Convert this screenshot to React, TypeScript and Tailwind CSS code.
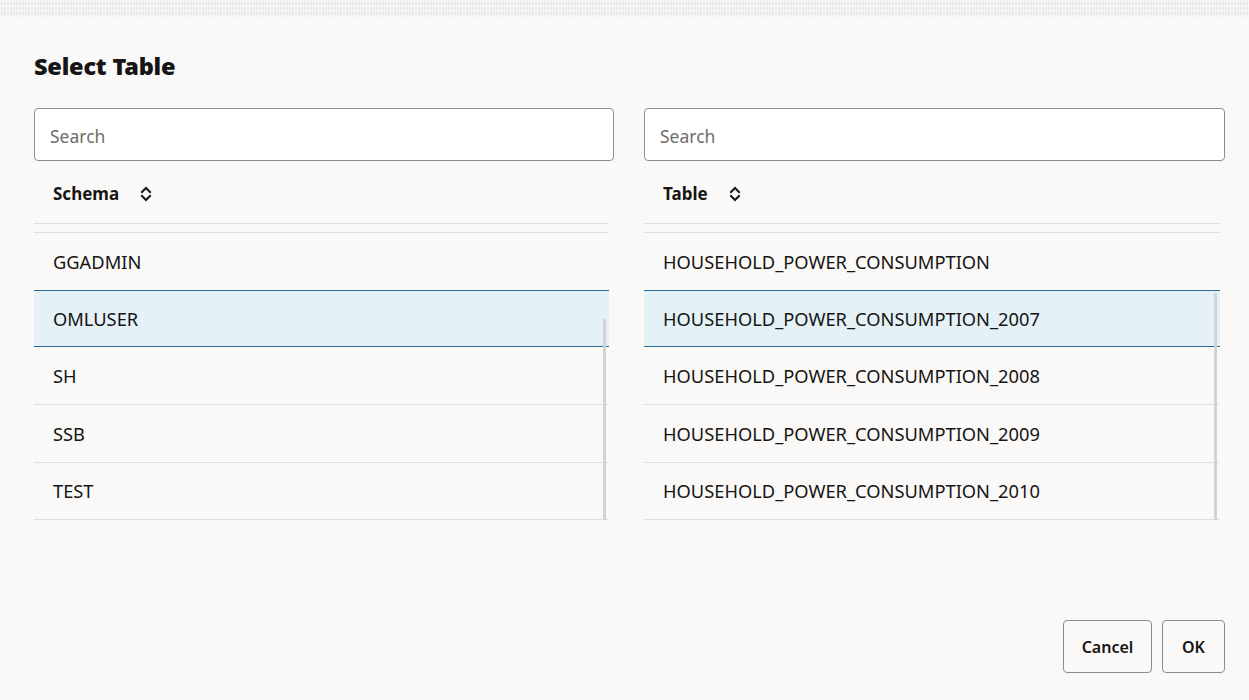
import React from "react";

const font = { fontFamily: '"Noto Sans", "Open Sans", sans-serif' };

function SortIcon() {
  return (
    <svg width="12" height="18" viewBox="0 0 12 18" fill="none" stroke="#161513" strokeWidth="2" strokeLinecap="square">
      <path d="M2 7 L6 3 L10 7" />
      <path d="M2 11 L6 15 L10 11" />
    </svg>
  );
}

function Panel({
  header,
  rows,
  selected,
  thumbTop,
}: {
  header: string;
  rows: string[];
  selected: number;
  thumbTop: number;
}) {
  return (
    <div className="flex flex-col">
      <div className="h-[53px] rounded-[4px] border border-[#8f8c89] bg-white flex items-center px-[15px] pt-[3px]">
        <span className="text-[17.5px] text-[#6f6c69]">Search</span>
      </div>
      <div className="mr-[5px] flex flex-col">
        <div className="h-[63px] border-b border-[#e1dfdd] flex items-center pl-[19px] pt-[4px]">
          <span className="text-[17px] font-bold text-[#161513]">{header}</span>
          <span className="ml-[21px] flex items-center">
            <SortIcon />
          </span>
        </div>
        <div className="relative mt-[8px] border-t border-[#e1dfdd]">
          {rows.map((r, i) => (
            <div
              key={r}
              className={
                i === selected
                  ? "h-[57.7px] box-border border-y border-[#2a6f96] bg-[#e4f1f7] flex items-center pl-[19px] -mt-px"
                  : "h-[57.7px] box-border border-b border-[#e1dfdd] flex items-center pl-[19px]"
              }
            >
              <span className="text-[18.3px] text-[#161513]">{r}</span>
            </div>
          ))}
          <div
            className="absolute right-[3px] bottom-0 w-[3px] bg-[#d3d3d3]"
            style={{ top: thumbTop }}
          />
        </div>
      </div>
    </div>
  );
}

export default function App() {
  return (
    <div className="w-full h-[700px] bg-[#faf9f8] flex flex-col overflow-hidden" style={font}>
      <div
        className="h-[17px] w-full bg-[#ebe9e7]"
        style={{
          backgroundImage:
            "repeating-linear-gradient(90deg, rgba(255,255,255,0.6) 0px, rgba(255,255,255,0.6) 1px, transparent 1px, transparent 3px), repeating-linear-gradient(0deg, rgba(255,255,255,0.4) 0px, rgba(255,255,255,0.4) 2px, transparent 2px, transparent 5px)",
        }}
      />
      <div className="flex-1 flex flex-col px-[34px] pr-[24px]">
        <h1 className="mt-[33px] text-[23.5px] leading-[32px] font-black text-[#161513] tracking-[-0.2px]">
          Select Table
        </h1>
        <div className="mt-[26px] grid grid-cols-[580px_581px] gap-[30px]">
          <Panel
            header="Schema"
            rows={["GGADMIN", "OMLUSER", "SH", "SSB", "TEST"]}
            selected={1}
            thumbTop={86}
          />
          <Panel
            header="Table"
            rows={[
              "HOUSEHOLD_POWER_CONSUMPTION",
              "HOUSEHOLD_POWER_CONSUMPTION_2007",
              "HOUSEHOLD_POWER_CONSUMPTION_2008",
              "HOUSEHOLD_POWER_CONSUMPTION_2009",
              "HOUSEHOLD_POWER_CONSUMPTION_2010",
            ]}
            selected={1}
            thumbTop={60}
          />
        </div>
        <div className="mt-auto mb-[27px] flex justify-end gap-[10px]">
          <button className="h-[53px] w-[89px] rounded-[4px] border border-[#8f8c89] bg-[#faf9f8] text-[16px] font-semibold text-[#161513]">
            Cancel
          </button>
          <button className="h-[53px] w-[63px] rounded-[4px] border border-[#8f8c89] bg-[#faf9f8] text-[16px] font-semibold text-[#161513]">
            OK
          </button>
        </div>
      </div>
    </div>
  );
}
